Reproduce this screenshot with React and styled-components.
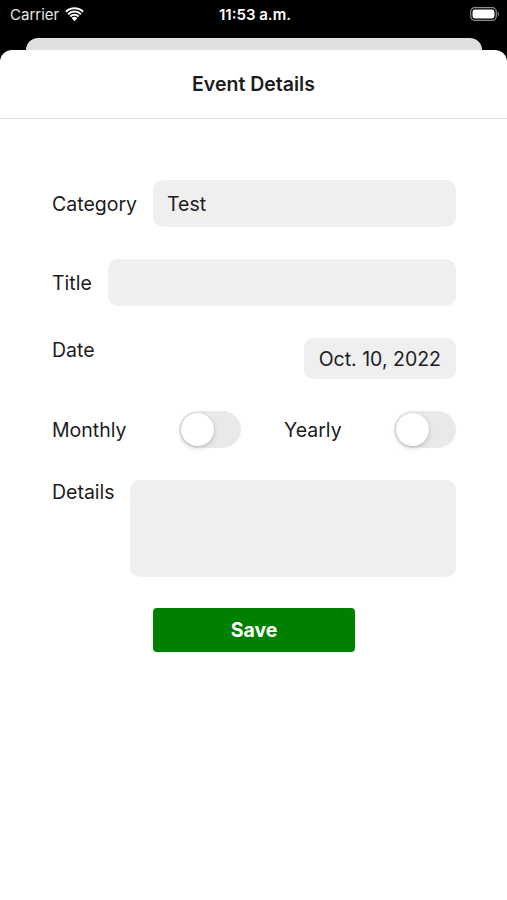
import React from 'react';
import styled, { createGlobalStyle } from 'styled-components';

const GlobalStyle = createGlobalStyle`
  html, body {
    margin: 0;
    padding: 0;
    background: #000;
  }
  body {
    font-family: Inter, "Noto Sans", sans-serif;
    -webkit-font-smoothing: antialiased;
  }
`;

const Screen = styled.div`
  width: 507px;
  height: 900px;
  background: #000;
  display: flex;
  flex-direction: column;
  overflow: hidden;
`;

const StatusBar = styled.div`
  height: 28px;
  display: grid;
  grid-template-columns: 1fr auto 1fr;
  align-items: center;
  padding: 0 7px 0 10px;
  color: #fff;
`;

const Carrier = styled.div`
  display: flex;
  align-items: center;
  gap: 6px;
  font-size: 15px;
  color: #e8e8e8;
`;

const Clock = styled.div`
  font-size: 15px;
  font-weight: 600;
`;

const BatteryWrap = styled.div`
  display: flex;
  justify-content: flex-end;
`;

const BackCard = styled.div`
  margin: 10px 25px 0 26px;
  height: 12px;
  background: #e0e0e0;
  border-radius: 12px 12px 0 0;
`;

const Sheet = styled.div`
  flex: 1;
  background: #fff;
  border-radius: 12px 12px 0 0;
  display: flex;
  flex-direction: column;
`;

const SheetHeader = styled.header`
  height: 68px;
  display: flex;
  align-items: center;
  justify-content: center;
  border-bottom: 1px solid #e4e4e6;
  font-size: 19.5px;
  font-weight: 600;
  color: #1c1c1e;
`;

const Form = styled.div`
  display: flex;
  flex-direction: column;
  gap: 32px;
  padding: 61px 51px 0 52px;
`;

const Row = styled.div`
  display: flex;
  align-items: ${({ $top }) => ($top ? 'flex-start' : 'center')};
  gap: ${({ $gap }) => $gap ?? 16}px;
`;

const Label = styled.span`
  font-size: 19.5px;
  color: #1c1c1e;
  line-height: 24px;
  white-space: nowrap;
`;

const Field = styled.div`
  flex: 1;
  height: ${({ $h }) => $h ?? 47}px;
  background: #efeff0;
  border-radius: 10px;
  display: flex;
  align-items: center;
  padding: 0 14px;
  font-size: 19.5px;
  color: #1c1c1e;
`;

const Spacer = styled.div`
  flex: 1;
`;

const DatePill = styled.div`
  height: 41px;
  padding: 0 15px;
  background: #efeff0;
  border-radius: 9px;
  display: flex;
  align-items: center;
  font-size: 19.5px;
  color: #1c1c1e;
`;

const Toggle = styled.div`
  width: 62px;
  height: 37px;
  border-radius: 19px;
  background: #e9e9eb;
  padding: 2px;
  box-sizing: border-box;
  display: flex;
  align-items: center;
  margin-right: ${({ $after }) => $after ?? 0}px;
`;

const Knob = styled.div`
  width: 33px;
  height: 33px;
  border-radius: 50%;
  background: #fff;
  box-shadow: 0 2px 5px rgba(0, 0, 0, 0.18), 0 0 1px rgba(0, 0, 0, 0.12);
`;

const ToggleRow = styled.div`
  display: flex;
  align-items: center;
`;

const SaveButton = styled.button`
  align-self: center;
  width: 202px;
  height: 44px;
  margin-top: -1px;
  border: none;
  border-radius: 4px;
  background: #008000;
  color: #fff;
  font-family: inherit;
  font-size: 19.5px;
  font-weight: 700;
`;

const Wifi = () => (
  <svg width="19" height="15" viewBox="0 0 19 15">
    <path d="M9.5 14.2 L6.6 11 A4.3 4.3 0 0 1 12.4 11 Z" fill="#fff" />
    <path d="M4.6 8.8 A7 7 0 0 1 14.4 8.8 L13 10.3 A5 5 0 0 0 6 10.3 Z" fill="#fff" />
    <path d="M2.4 6.4 A10.2 10.2 0 0 1 16.6 6.4 L15.2 7.9 A8.2 8.2 0 0 0 3.8 7.9 Z" fill="#fff" />
    <path d="M0.2 4 A13.4 13.4 0 0 1 18.8 4 L17.4 5.5 A11.4 11.4 0 0 0 1.6 5.5 Z" fill="#fff" />
  </svg>
);

const Battery = () => (
  <svg width="30" height="14" viewBox="0 0 30 14">
    <rect x="0.7" y="0.7" width="25.6" height="12.6" rx="4" fill="none" stroke="#8e8e8e" strokeWidth="1.2" />
    <rect x="2.5" y="2.5" width="22" height="9" rx="2.4" fill="#fff" />
    <path d="M27.8 4.8 C29.3 5.2 29.3 8.8 27.8 9.2 Z" fill="#8e8e8e" />
  </svg>
);

const Switch = ({ after }) => (
  <Toggle $after={after}>
    <Knob />
  </Toggle>
);

const App = () => {
  return (
    <Screen>
      <GlobalStyle />
      <StatusBar>
        <Carrier>
          Carrier
          <Wifi />
        </Carrier>
        <Clock>11:53 a.m.</Clock>
        <BatteryWrap>
          <Battery />
        </BatteryWrap>
      </StatusBar>
      <BackCard />
      <Sheet>
        <SheetHeader>Event Details</SheetHeader>
        <Form>
          <Row>
            <Label>Category</Label>
            <Field>Test</Field>
          </Row>
          <Row>
            <Label>Title</Label>
            <Field />
          </Row>
          <Row $top>
            <Label>Date</Label>
            <Spacer />
            <DatePill>Oct. 10, 2022</DatePill>
          </Row>
          <ToggleRow>
            <Label>Monthly</Label>
            <Spacer />
            <Switch after={43} />
            <Label>Yearly</Label>
            <Spacer />
            <Switch />
          </ToggleRow>
          <Row $top $gap={15}>
            <Label>Details</Label>
            <Field $h={97} />
          </Row>
          <SaveButton>Save</SaveButton>
        </Form>
      </Sheet>
    </Screen>
  );
};

export default App;
